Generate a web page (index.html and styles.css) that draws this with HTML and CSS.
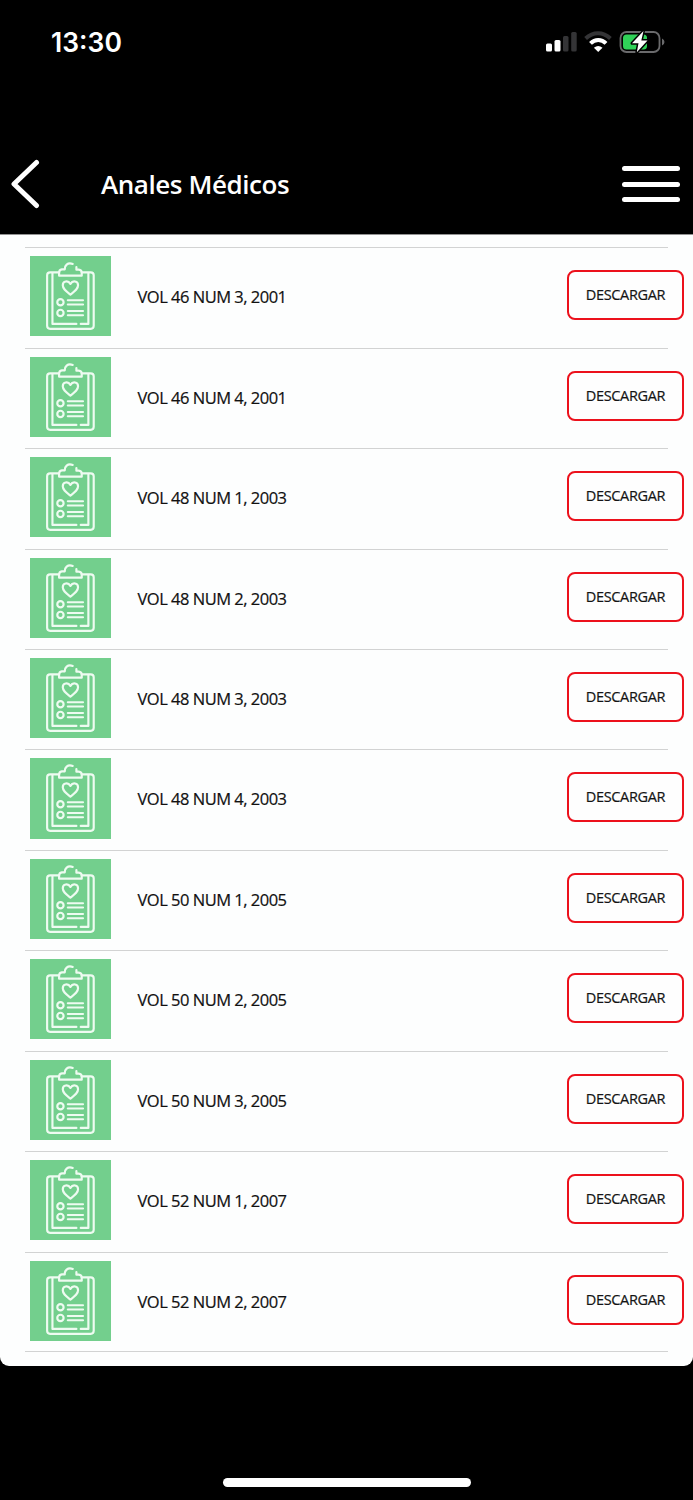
FILE: index.html
```
<!DOCTYPE html>
<html lang="es">
<head>
<meta charset="utf-8">
<title>Anales Médicos</title>
<link rel="stylesheet" href="styles.css">
</head>
<body>
<svg class="defs" aria-hidden="true">
  <symbol id="clipboard" viewBox="31 49 241 241">
    <g fill="none" stroke="#eefbf1" stroke-width="6.500" stroke-linecap="round" stroke-linejoin="round">
      <path d="M118 98H91Q82 98 82 107V259Q82 268 91 268H213Q222 268 222 259V107Q222 98 213 98H186"/>
      <path d="M98 101V253H170M183 253H206V101"/>
      <path d="M159 73C143 67 134 79 135 89H126Q118 90 118 99V108H186V99Q186 91 177 90H170V82"/>
      <path d="M152 165C139 155 129 148 129 137C129 124 145 121 152 133C159 121 175 124 175 137C175 148 165 155 152 165Z"/>
      <circle cx="122" cy="188" r="9.5"/>
      <circle cx="122" cy="220" r="9.5"/>
      <path d="M144 182H190M144 195H190M144 214H190M144 227H190" stroke-width="6"/>
    </g>
  </symbol>
</svg>
<header class="top">
  <div class="status">
    <span class="clock">13:30</span>
    <svg class="indicators" viewBox="0 0 120 28" width="120" height="28">
      <g fill="#fff">
        <rect x="1" y="14.500" width="6" height="8" rx="1.5"/>
        <rect x="9.500" y="11" width="6" height="11.500" rx="1.500"/>
        <rect x="18" y="7" width="5.500" height="15.500" rx="1.500" fill="#343436"/>
        <rect x="26.200" y="3" width="5.500" height="19.500" rx="1.500" fill="#343436"/>
      </g>
      <path d="M40.600 9.500C48 2.500 58 2.500 65.400 9.500" fill="none" stroke="#343436" stroke-width="4"/>
      <path d="M45.500 14.300C50 9.800 56.500 9.800 61 14.300" fill="none" stroke="#fff" stroke-width="4"/>
      <path d="M53.200 23L48.900 18.800Q53.200 15.300 57.500 18.800Z" fill="#fff"/>
      <rect x="75.500" y="3" width="39" height="20" rx="6" fill="none" stroke="#6a6a6c" stroke-width="1.800"/>
      <path d="M117 9.500Q119.500 10.500 119.500 13T117 16.500Z" fill="#6a6a6c"/>
      <rect x="78" y="5.500" width="24" height="15" rx="3.500" fill="#30d158"/>
      <path d="M98.500 2L87 14.300H93.500L91.800 23.300L102.500 11.500H96.300Z" fill="#fff" stroke="#000" stroke-width="3" paint-order="stroke" stroke-linejoin="round"/>
    </svg>
  </div>
  <nav class="bar">
    <svg class="back" viewBox="0 0 32 50" width="32" height="50"><path d="M27.500 3.500L5 25L27.500 46.500" fill="none" stroke="#fff" stroke-width="5" stroke-linecap="round" stroke-linejoin="round"/></svg>
    <h1 class="title">Anales Médicos</h1>
    <div class="menu"><i></i><i></i><i></i></div>
  </nav>
</header>
<main class="sheet">
  <ul class="list">
    <li class="row"><svg class="thumb"><use href="#clipboard"/></svg><span class="name">VOL 46 NUM 3, 2001</span><button class="download">DESCARGAR</button></li>
    <li class="row"><svg class="thumb"><use href="#clipboard"/></svg><span class="name">VOL 46 NUM 4, 2001</span><button class="download">DESCARGAR</button></li>
    <li class="row"><svg class="thumb"><use href="#clipboard"/></svg><span class="name">VOL 48 NUM 1, 2003</span><button class="download">DESCARGAR</button></li>
    <li class="row"><svg class="thumb"><use href="#clipboard"/></svg><span class="name">VOL 48 NUM 2, 2003</span><button class="download">DESCARGAR</button></li>
    <li class="row"><svg class="thumb"><use href="#clipboard"/></svg><span class="name">VOL 48 NUM 3, 2003</span><button class="download">DESCARGAR</button></li>
    <li class="row"><svg class="thumb"><use href="#clipboard"/></svg><span class="name">VOL 48 NUM 4, 2003</span><button class="download">DESCARGAR</button></li>
    <li class="row"><svg class="thumb"><use href="#clipboard"/></svg><span class="name">VOL 50 NUM 1, 2005</span><button class="download">DESCARGAR</button></li>
    <li class="row"><svg class="thumb"><use href="#clipboard"/></svg><span class="name">VOL 50 NUM 2, 2005</span><button class="download">DESCARGAR</button></li>
    <li class="row"><svg class="thumb"><use href="#clipboard"/></svg><span class="name">VOL 50 NUM 3, 2005</span><button class="download">DESCARGAR</button></li>
    <li class="row"><svg class="thumb"><use href="#clipboard"/></svg><span class="name">VOL 52 NUM 1, 2007</span><button class="download">DESCARGAR</button></li>
    <li class="row"><svg class="thumb"><use href="#clipboard"/></svg><span class="name">VOL 52 NUM 2, 2007</span><button class="download">DESCARGAR</button></li>
  </ul>
</main>
<footer class="bottom"><div class="home"></div></footer>
</body>
</html>
```

FILE: styles.css
```
* { box-sizing: border-box; }
body {
  margin: 0;
  width: 693px;
  height: 1500px;
  overflow: hidden;
  display: flex;
  flex-direction: column;
  background: #000;
  font-family: "Trebuchet MS", "Open Sans", sans-serif;
}
.defs { display: none; }
.top { height: 234px; flex: none; color: #fff; }
.status {
  height: 84px;
  padding: 1px 28px 0 51px;
  display: flex;
  align-items: center;
  justify-content: space-between;
}
.clock {
  font: 600 26.500px/32px Inter, sans-serif;
  padding-bottom: 1px;
}
.indicators { display: block; }
.bar {
  height: 150px;
  padding: 75px 13px 0 9px;
  display: flex;
  align-items: flex-start;
}
.back { flex: none; }
.title {
  margin: 9px 0 0 60px;
  flex: 1;
  font-size: 26px;
  line-height: 32px;
  font-weight: 600;
  letter-spacing: -0.430px;
  white-space: nowrap;
}
.menu {
  width: 58px;
  margin-top: 7px;
  display: flex;
  flex-direction: column;
  gap: 10.600px;
}
.menu i { height: 5px; border-radius: 3px; background: #fff; }
.sheet {
  height: 1132px;
  flex: none;
  padding: 12.300px 9px 0 25px;
  background: #fdfefe;
  border-top: 1px solid #929292;
  border-radius: 0 0 9px 9px;
}
.list {
  list-style: none;
  margin: 0;
  padding: 0;
  background: linear-gradient(#d2d3d3, #d2d3d3) left bottom / 643px 1px no-repeat;
  height: 1105.200px;
}
.row {
  height: 100.430px;
  padding: 9px 0 0 5px;
  display: flex;
  align-items: flex-start;
  background: linear-gradient(#d2d3d3, #d2d3d3) left top / 643px 1px no-repeat;
}
.thumb { width: 80.500px; height: 80.200px; flex: none; background: #73cf8d; }
.name {
  margin: 30px 0 0 27px;
  flex: 1;
  font-size: 16.500px;
  line-height: 22px;
  letter-spacing: -0.500px;
  color: #111;
  -webkit-text-stroke: 0.200px #111;
  white-space: nowrap;
}
.download {
  width: 117px;
  height: 50px;
  margin: 14px 0 0;
  padding: 0;
  border: 2px solid #ec111c;
  border-radius: 8px;
  background: #fefefe;
  color: #141414;
  font: 14.500px/20px "Trebuchet MS", "Open Sans", sans-serif;
  letter-spacing: -0.350px;
  -webkit-text-stroke: 0.200px #141414;
}
.bottom {
  flex: 1;
  display: flex;
  justify-content: center;
  padding-top: 111.500px;
}
.home {
  width: 248px;
  height: 9px;
  border-radius: 5px;
  background: #fff;
}
```
